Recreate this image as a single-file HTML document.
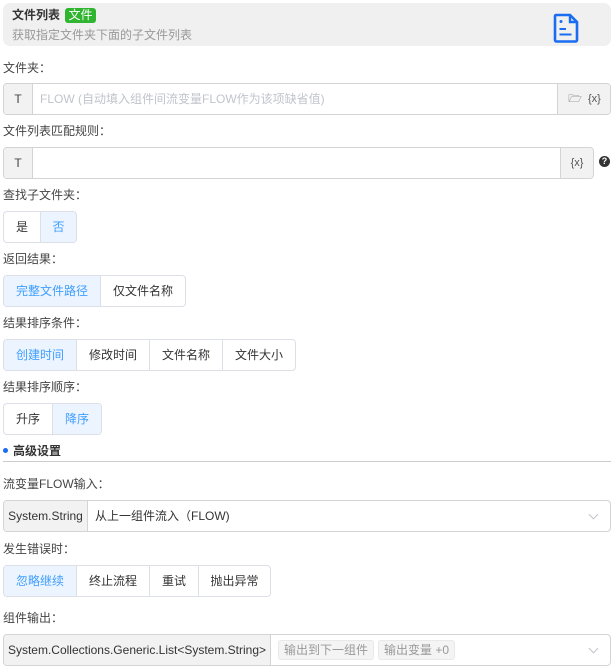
<!DOCTYPE html>
<html><head><meta charset="utf-8"><style>
*{box-sizing:border-box;margin:0;padding:0}
body{width:614px;height:670px;background:#fff;font-family:"Liberation Sans","Noto Sans CJK SC",sans-serif;font-size:12px;color:#333;position:relative;overflow:hidden}
.a{position:absolute}
.lbl{position:absolute;left:3px;color:#444;font-size:12px;line-height:14px}
.inp{position:absolute;left:3px;height:32px;border:1px solid #d4d4d4;border-radius:4px;background:#fff;overflow:hidden}
.add{position:absolute;top:0;height:30px;background:#f2f2f2;line-height:30px;color:#444;text-align:center}
.grp{position:absolute;left:3px;height:32px;display:flex;border:1px solid #dcdfe6;border-radius:4px;overflow:hidden}
.grp div{height:30px;line-height:30px;text-align:center;color:#333;border-left:1px solid #dcdfe6}
.grp div:first-child{border-left:none}
.grp .on{background:#ebf4ff;color:#409eff}
.chev{position:absolute;right:13px;top:10px;width:7px;height:7px;border-right:1px solid #c0c4cc;border-bottom:1px solid #c0c4cc;transform:rotate(45deg)}
</style></head><body>
<div class="a" style="left:3px;top:3px;width:608px;height:43px;background:#f0f0f0;border-radius:7px"></div>
<div class="a" style="left:12px;top:8px;font-weight:bold;font-size:12px;line-height:15px;color:#333">文件列表</div>
<div class="a" style="left:65px;top:8px;width:31px;height:15px;background:#2fb52f;color:#fff;border-radius:3px;text-align:center;line-height:15px;font-size:12px">文件</div>
<div class="a" style="left:12px;top:28px;color:#999;font-size:12px;line-height:14px">获取指定文件夹下面的子文件列表</div>
<svg class="a" style="left:553px;top:13px" width="27" height="30" viewBox="0 0 27 30"><path d="M3 2h14l7 7v18a1.5 1.5 0 0 1-1.5 1.5h-19A1.5 1.5 0 0 1 2 27V3.5A1.5 1.5 0 0 1 3 2z" fill="none" stroke="#1a6cf0" stroke-width="2.6"/><path d="M17 2v7h7" fill="none" stroke="#1a6cf0" stroke-width="2.4"/><circle cx="8" cy="8.5" r="1.5" fill="#1a6cf0"/><rect x="6.5" y="15" width="6.5" height="2" fill="#1a6cf0"/><rect x="6.5" y="20.5" width="12" height="2" fill="#1a6cf0"/></svg>

<div class="lbl" style="top:61px">文件夹：</div>
<div class="inp" style="top:83px;width:608px">
 <div class="add" style="left:0;width:29px;border-right:1px solid #d4d4d4">T</div>
 <div class="a" style="left:36px;top:0;line-height:30px;color:#c0c4cc">FLOW (自动填入组件间流变量FLOW作为该项缺省值)</div>
 <div class="add" style="left:553px;width:54px;border-left:1px solid #d4d4d4;color:#555;font-size:11px">🗁&nbsp; {x}</div>
</div>
<div class="lbl" style="top:124px">文件列表匹配规则：</div>
<div class="inp" style="top:147px;width:591px">
 <div class="add" style="left:0;width:29px;border-right:1px solid #d4d4d4">T</div>
 <div class="add" style="left:556px;width:33px;border-left:1px solid #d4d4d4;color:#555;font-size:11px">{x}</div>
</div>
<div class="a" style="left:599px;top:156px;width:11px;height:11px;border-radius:50%;background:#333;color:#fff;font-size:9px;line-height:11px;text-align:center;font-weight:bold">?</div>

<div class="lbl" style="top:188px">查找子文件夹：</div>
<div class="grp" style="top:211px"><div style="width:36px">是</div><div class="on" style="width:36px">否</div></div>
<div class="lbl" style="top:252px">返回结果：</div>
<div class="grp" style="top:275px"><div class="on" style="width:96px">完整文件路径</div><div style="width:85px">仅文件名称</div></div>
<div class="lbl" style="top:316px">结果排序条件：</div>
<div class="grp" style="top:339px"><div class="on" style="width:72px">创建时间</div><div style="width:73px">修改时间</div><div style="width:73px">文件名称</div><div style="width:73px">文件大小</div></div>
<div class="lbl" style="top:380px">结果排序顺序：</div>
<div class="grp" style="top:403px"><div style="width:48px">升序</div><div class="on" style="width:49px">降序</div></div>
<div class="a" style="left:3px;top:448px;width:5px;height:5px;border-radius:50%;background:#1a6cf0"></div>
<div class="a" style="left:13px;top:444px;font-weight:bold;color:#333;line-height:14px">高级设置</div>
<div class="a" style="left:3px;top:461px;width:608px;height:1px;background:#ccc"></div>

<div class="lbl" style="top:477px">流变量FLOW输入：</div>
<div class="inp" style="top:500px;width:608px">
 <div class="add" style="left:0;width:84px;border-right:1px solid #d4d4d4;color:#333">System.String</div>
 <div class="a" style="left:91px;top:0;line-height:30px;color:#333">从上一组件流入（FLOW)</div>
 <div class="chev"></div>
</div>
<div class="lbl" style="top:542px">发生错误时：</div>
<div class="grp" style="top:565px"><div class="on" style="width:72px">忽略继续</div><div style="width:73px">终止流程</div><div style="width:49px">重试</div><div style="width:72px">抛出异常</div></div>
<div class="lbl" style="top:611px">组件输出：</div>
<div class="inp" style="top:634px;width:608px">
 <div class="add" style="left:0;width:267px;border-right:1px solid #d4d4d4;color:#333">System.Collections.Generic.List&lt;System.String&gt;</div>
 <div class="a" style="left:274px;top:5px;height:20px;line-height:18px;padding:0 5px;background:#f4f4f5;border:1px solid #e9e9eb;border-radius:3px;color:#999">输出到下一组件</div>
 <div class="a" style="left:374px;top:5px;height:20px;line-height:18px;padding:0 5px;background:#f4f4f5;border:1px solid #e9e9eb;border-radius:3px;color:#999">输出变量 +0</div>
 <div class="chev"></div>
</div>
</body></html>
